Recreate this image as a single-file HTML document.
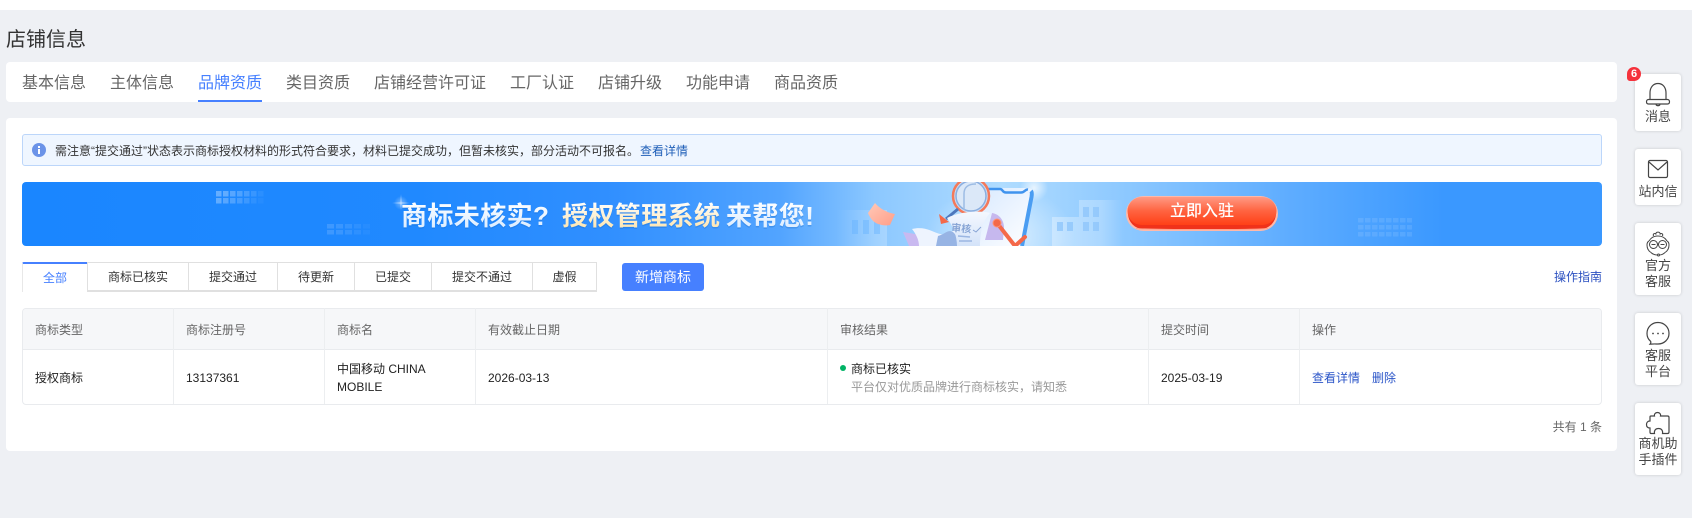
<!DOCTYPE html>
<html lang="zh-CN">
<head>
<meta charset="utf-8">
<title>店铺信息</title>
<style>
html,body{margin:0;padding:0;width:1692px;height:518px;overflow:hidden;background:#eef0f4;}
body{font-family:"Liberation Sans","Noto Sans CJK SC",sans-serif;color:#222;position:relative;font-size:12px;}
.a{position:absolute;white-space:nowrap;}
.t{position:absolute;white-space:nowrap;line-height:18px;height:18px;}
.tab{position:absolute;top:64px;height:40px;line-height:40px;font-size:16px;color:#666;white-space:nowrap;}
.st{position:absolute;top:262px;height:27px;line-height:29px;text-align:center;color:#333;background:#fff;border:1px solid #e0e0e0;border-left:0;border-bottom-width:2px;box-sizing:content-box;font-size:12px;}
.v{position:absolute;top:308px;width:1px;height:96px;background:#eceef0;}
.th{position:absolute;top:321px;line-height:18px;color:#666;white-space:nowrap;}
.td{position:absolute;line-height:18px;color:#222;white-space:nowrap;}
.side{position:absolute;left:1635px;width:46px;background:#fff;border-radius:3px;box-shadow:0 0 3px rgba(0,0,0,.16);text-align:center;font-size:13px;line-height:16px;color:#444;}
.side svg{position:absolute;left:0;top:0;}
.side div{position:absolute;left:0;right:0;}
</style>
</head>
<body>
<div class="a" style="left:0;top:0;width:1692px;height:10px;background:#fff"></div>
<div class="a" style="left:6px;top:26px;font-size:20px;line-height:28px;color:#333">店铺信息</div>

<div class="a" style="left:6px;top:62px;width:1611px;height:40px;background:#fff;border-radius:4px"></div>
<div class="tab" style="left:22px">基本信息</div>
<div class="tab" style="left:110px">主体信息</div>
<div class="tab" style="left:198px;color:#4680ff">品牌资质</div>
<div class="a" style="left:198px;top:100px;width:64px;height:2px;background:#4680ff"></div>
<div class="tab" style="left:286px">类目资质</div>
<div class="tab" style="left:374px">店铺经营许可证</div>
<div class="tab" style="left:510px">工厂认证</div>
<div class="tab" style="left:598px">店铺升级</div>
<div class="tab" style="left:686px">功能申请</div>
<div class="tab" style="left:774px">商品资质</div>

<div class="a" style="left:6px;top:118px;width:1611px;height:333px;background:#fff;border-radius:4px"></div>

<div class="a" style="left:22px;top:134px;width:1578px;height:30px;background:#eff6ff;border:1px solid #bcd6fa;border-radius:3px"></div>
<svg class="a" style="left:32px;top:143px" width="14" height="14" viewBox="0 0 14 14"><circle cx="7" cy="7" r="7" fill="#6b93e8"/><rect x="6" y="6" width="2" height="5" fill="#fff"/><rect x="6" y="3" width="2" height="2" fill="#fff"/></svg>
<div class="t" style="left:55px;top:142px;color:#333">需注意“提交通过”状态表示商标授权材料的形式符合要求，材料已提交成功，但暂未核实，部分活动不可报名。<span style="color:#1f5fb8;margin-left:1px">查看详情</span></div>

<!-- banner -->
<div class="a" style="left:22px;top:182px;width:1580px;height:64px;border-radius:4px;overflow:hidden;background:linear-gradient(90deg,#1a86ff 0%,#2089ff 25%,#308fff 37%,#52a4ff 48%,#8cc8ff 54%,#b0dcff 62%,#8cc8ff 70%,#5fadff 80%,#3a98ff 90%,#3a98ff 100%)">
<svg width="1580" height="64" viewBox="22 182 1580 64" style="position:absolute;left:0;top:0">
<defs>
<radialGradient id="g1"><stop offset="0" stop-color="#fff" stop-opacity=".75"/><stop offset="1" stop-color="#fff" stop-opacity="0"/></radialGradient>
<linearGradient id="bld" x1="0" y1="0" x2="1" y2="0"><stop offset="0" stop-color="#fff" stop-opacity=".32"/><stop offset=".7" stop-color="#fff" stop-opacity=".22"/><stop offset="1" stop-color="#fff" stop-opacity="0"/></linearGradient>
<linearGradient id="bld2" x1="0" y1="0" x2="1" y2="0"><stop offset="0" stop-color="#fff" stop-opacity="0"/><stop offset="1" stop-color="#fff" stop-opacity=".22"/></linearGradient>
<linearGradient id="gold" x1="0" y1="0" x2="0" y2="1"><stop offset="0" stop-color="#ffffff"/><stop offset="1" stop-color="#fde3a9"/></linearGradient>
<linearGradient id="white" x1="0" y1="0" x2="0" y2="1"><stop offset="0" stop-color="#ffffff"/><stop offset="1" stop-color="#d8ebff"/></linearGradient>
<linearGradient id="btn" x1="0" y1="0" x2="0" y2="1"><stop offset="0" stop-color="#ff9a84"/><stop offset=".5" stop-color="#ff6340"/><stop offset="1" stop-color="#ff4016"/></linearGradient>
<linearGradient id="paper" x1="0" y1="0" x2="0" y2="1"><stop offset="0" stop-color="#f4f8ff"/><stop offset="1" stop-color="#d4e3f9"/></linearGradient>
<linearGradient id="ph" x1="0" y1="0" x2="1" y2="1"><stop offset="0" stop-color="#d8e9ff"/><stop offset="1" stop-color="#ffffff"/></linearGradient>
<linearGradient id="flag" x1="0" y1="0" x2="1" y2="1"><stop offset="0" stop-color="#ffc9b8"/><stop offset="1" stop-color="#ff9e88"/></linearGradient>
<pattern id="dp" width="7" height="7" patternUnits="userSpaceOnUse"><rect width="5.5" height="5.5" rx=".6" fill="#fff"/></pattern>
</defs>
<!-- pixel dots -->
<g>
<rect x="216" y="191" width="5.500" height="5.500" fill="#fff" opacity=".32"/><rect x="223" y="191" width="5.500" height="5.500" fill="#fff" opacity=".3"/><rect x="230" y="191" width="5.500" height="5.500" fill="#fff" opacity=".26"/><rect x="237" y="191" width="5.500" height="5.500" fill="#fff" opacity=".22"/><rect x="244" y="191" width="5.500" height="5.500" fill="#fff" opacity=".18"/><rect x="251" y="191" width="5.500" height="5.500" fill="#fff" opacity=".12"/><rect x="258" y="191" width="5.500" height="5.500" fill="#fff" opacity=".06"/>
<rect x="216" y="198" width="5.500" height="5.500" fill="#fff" opacity=".3"/><rect x="223" y="198" width="5.500" height="5.500" fill="#fff" opacity=".26"/><rect x="230" y="198" width="5.500" height="5.500" fill="#fff" opacity=".22"/><rect x="237" y="198" width="5.500" height="5.500" fill="#fff" opacity=".18"/><rect x="244" y="198" width="5.500" height="5.500" fill="#fff" opacity=".14"/><rect x="251" y="198" width="5.500" height="5.500" fill="#fff" opacity=".08"/><rect x="258" y="198" width="5.500" height="5.500" fill="#fff" opacity=".04"/>
<rect x="327" y="224" width="7" height="4.500" fill="#fff" opacity=".14"/><rect x="336" y="224" width="7" height="4.500" fill="#fff" opacity=".12"/><rect x="345" y="224" width="7" height="4.500" fill="#fff" opacity=".1"/><rect x="354" y="224" width="7" height="4.500" fill="#fff" opacity=".07"/><rect x="363" y="224" width="7" height="4.500" fill="#fff" opacity=".04"/>
<rect x="327" y="230" width="7" height="4.500" fill="#fff" opacity=".14"/><rect x="336" y="230" width="7" height="4.500" fill="#fff" opacity=".12"/><rect x="345" y="230" width="7" height="4.500" fill="#fff" opacity=".1"/><rect x="354" y="230" width="7" height="4.500" fill="#fff" opacity=".07"/><rect x="363" y="230" width="7" height="4.500" fill="#fff" opacity=".04"/>
<rect x="1358" y="218" width="54" height="5" fill="url(#dp)" opacity=".1"/><rect x="1358" y="225" width="54" height="5" fill="url(#dp)" opacity=".1"/><rect x="1358" y="232" width="54" height="5" fill="url(#dp)" opacity=".1"/>
</g>
<!-- star at title start -->
<circle cx="401" cy="203" r="7" fill="url(#g1)" opacity=".5"/>
<path d="M401 194L401.600 202.400L410 203L401.600 203.600L401 210L400.400 203.600L392 203L400.400 202.400Z" fill="#fff" opacity=".55"/>
<!-- glow behind illustration -->
<ellipse cx="1000" cy="236" rx="75" ry="50" fill="url(#g1)" opacity=".8"/>
<circle cx="1034" cy="188" r="14" fill="url(#g1)"/>
<!-- left building -->
<path d="M836 210H887V246H836Z" fill="url(#bld2)"/>
<rect x="852" y="220" width="6" height="14" fill="#5faeff" opacity=".4"/><rect x="863" y="220" width="6" height="14" fill="#5faeff" opacity=".4"/><rect x="874" y="220" width="6" height="14" fill="#5faeff" opacity=".4"/>
<!-- flag -->
<path d="M868 213L875 203C880 209 888 213 895 214L890 225C884 226 882 225 878 224C873 222 870 218 868 213Z" fill="url(#flag)"/>
<!-- right building -->
<path d="M1052 246V217H1079V200H1123V246Z" fill="url(#bld)"/>
<rect x="1057" y="222" width="6" height="9" fill="#8fc6fb" opacity=".8"/><rect x="1067" y="222" width="6" height="9" fill="#8fc6fb" opacity=".8"/>
<rect x="1083" y="207" width="6" height="10" fill="#8fc6fb" opacity=".8"/><rect x="1093" y="207" width="6" height="10" fill="#8fc6fb" opacity=".8"/><rect x="1083" y="222" width="6" height="9" fill="#8fc6fb" opacity=".8"/><rect x="1093" y="222" width="6" height="9" fill="#8fc6fb" opacity=".8"/>
<!-- phone -->
<path d="M988 188H1028C1031 188 1033 190 1032.500 193L1023 246H975Z" fill="url(#ph)"/>
<path d="M988 189H1000C1003 189 1002 192.500 1006 192.500H1021C1025 192.500 1025 189 1028 189.500" fill="none" stroke="#3f93ee" stroke-width="2.500"/>
<path d="M1031 191C1032 192 1032 194 1031.500 197L1022 246" fill="none" stroke="#4a9df2" stroke-width="4"/>
<!-- magnifier -->
<circle cx="971" cy="196" r="18" fill="#c9dcf3" stroke="#f4795a" stroke-width="2.500"/>
<circle cx="971" cy="196" r="15" fill="#dbe8f8" stroke="#8aaee0" stroke-width="1.500"/>
<path d="M964 210V194C964 187 968 184 976 184" stroke="#9dbce4" stroke-width="1.500" fill="none"/>
<path d="M958 209L946 219" stroke="#4e78bd" stroke-width="3"/>
<path d="M939 214L949 222L941 224Z" fill="#f4694a"/>
<!-- papers -->
<path d="M903 232L940 238L950 246H909Z" fill="#c9b9f0"/>
<path d="M912 229C925 226 932 232 940 234C948 236 952 228 958 232L962 246H919C919 240 916 234 912 229Z" fill="#eef4fe"/>
<path d="M938 236C945 234 948 229 953 232C958 236 958 242 958 246H936Z" fill="#97b4e4"/>
<path d="M992 213C999 214 1004 220 1004 228L1003 240L985 240Z" fill="#c6b8ee"/>
<path d="M947 218C958 212 980 210 990 213C982 222 980 234 980 246H957C957 236 953 226 947 218Z" fill="url(#paper)"/>
<text x="951" y="231" font-family="Liberation Sans,Noto Sans CJK SC,sans-serif" font-size="10" font-weight="700" fill="#88a5d5" transform="rotate(5 951 231)">审核</text>
<path d="M973 230L976 232L981 227" stroke="#88a5d5" stroke-width="1" fill="none"/>
<path d="M958 236L970 237M959 241L972 241" stroke="#9bb6e2" stroke-width="1.500"/>
<!-- red arm -->
<path d="M997 223L1015 246L1025 237" stroke="#f4694a" stroke-width="4" fill="none" stroke-linecap="round"/>
<circle cx="997" cy="223" r="4" fill="#f4694a" stroke="#ff9274" stroke-width="1"/>
<!-- CTA button -->
<rect x="1126" y="196" width="152" height="35" rx="17.500" fill="#ffb9a9"/>
<rect x="1128" y="198" width="148" height="31" rx="15.500" fill="#f0321a"/>
<rect x="1127.500" y="197" width="149" height="28" rx="14" fill="url(#btn)"/>
<path d="M1136 228.500C1152 230 1252 230 1268 228.500" stroke="#ffa08c" stroke-width="1" fill="none"/>
<text x="1202" y="216" text-anchor="middle" font-family="Liberation Sans,Noto Sans CJK SC,sans-serif" font-size="16" font-weight="500" fill="#fff">立即入驻</text>
<!-- title -->
<g font-family="Liberation Sans,Noto Sans CJK SC,sans-serif" font-size="26" font-weight="700" style="letter-spacing:.4px">
<text x="401" y="225" fill="#1668c8" opacity=".3" transform="translate(0 1.500)">商标未核实?</text>
<text x="562" y="225" fill="#1668c8" opacity=".3" transform="translate(0 1.500)">授权管理系统</text>
<text x="726" y="225" fill="#1668c8" opacity=".3" transform="translate(0 1.500)">来帮您!</text>
<text x="401" y="225" fill="url(#white)">商标未核实?</text>
<text x="562" y="225" fill="url(#gold)">授权管理系统</text>
<text x="726" y="225" fill="url(#white)">来帮您!</text>
</g>
</svg>
</div>

<!-- subtabs -->
<div class="a" style="left:22px;top:262px;width:65px;height:30px;background:#fff;border-left:1px solid #e8e8e8;border-top:2px solid #4680ff;box-sizing:border-box;border-radius:2px 0 0 0;text-align:center;line-height:28px;color:#4680ff">全部</div>
<div class="st" style="left:87px;width:100px;border-left:1px solid #e0e0e0">商标已核实</div>
<div class="st" style="left:189px;width:88px">提交通过</div>
<div class="st" style="left:278px;width:76px">待更新</div>
<div class="st" style="left:355px;width:76px">已提交</div>
<div class="st" style="left:432px;width:100px">提交不通过</div>
<div class="st" style="left:533px;width:63px">虚假</div>
<div class="a" style="left:622px;top:263px;width:82px;height:28px;line-height:28px;background:#4680ff;border-radius:3px;color:#fff;text-align:center;font-size:14px">新增商标</div>
<div class="t" style="right:90px;top:268px;color:#2b50c0">操作指南</div>

<!-- table -->
<div class="a" style="left:22px;top:308px;width:1580px;height:97px;box-sizing:border-box;border:1px solid #e9ebee;border-radius:4px;overflow:hidden;background:#fff">
  <div style="height:40px;background:#f6f7f9;border-bottom:1px solid #e9ebee"></div>
</div>
<div class="v" style="left:173px"></div>
<div class="v" style="left:324px"></div>
<div class="v" style="left:475px"></div>
<div class="v" style="left:827px"></div>
<div class="v" style="left:1148px"></div>
<div class="v" style="left:1299px"></div>
<div class="th" style="left:35px">商标类型</div>
<div class="th" style="left:186px">商标注册号</div>
<div class="th" style="left:337px">商标名</div>
<div class="th" style="left:488px">有效截止日期</div>
<div class="th" style="left:840px">审核结果</div>
<div class="th" style="left:1161px">提交时间</div>
<div class="th" style="left:1312px">操作</div>

<div class="td" style="left:35px;top:369px">授权商标</div>
<div class="td" style="left:186px;top:369px">13137361</div>
<div class="td" style="left:337px;top:360px">中国移动 CHINA<br>MOBILE</div>
<div class="td" style="left:488px;top:369px">2026-03-13</div>
<div class="a" style="left:840px;top:365px;width:6px;height:6px;border-radius:50%;background:#00b365"></div>
<div class="td" style="left:851px;top:360px">商标已核实</div>
<div class="td" style="left:851px;top:378px;color:#999">平台仅对优质品牌进行商标核实，请知悉</div>
<div class="td" style="left:1161px;top:369px">2025-03-19</div>
<div class="td" style="left:1312px;top:369px;color:#2b55c8">查看详情</div>
<div class="td" style="left:1372px;top:369px;color:#2b55c8">删除</div>
<div class="t" style="right:90px;top:418px;color:#666">共有 1 条</div>

<!-- sidebar -->
<div class="side" style="top:74px;height:57px">
<svg width="46" height="57" viewBox="0 0 46 57" fill="none" stroke="#444" stroke-width="1.200"><path d="M15 25.500V19C15 13 18.500 9.500 23 9.500C27.500 9.500 31 13 31 19V25.500"/><path d="M13.500 25.500H32.500C33.700 25.500 34.500 26.500 34.500 27.800C34.500 29.200 33.700 30 32.500 30H13.500C12.300 30 11.500 29.200 11.500 27.800C11.500 26.500 12.300 25.500 13.500 25.500Z"/><path d="M21 30.500C21.500 32 24.500 32 25 30.500"/></svg>
<div style="top:35px">消息</div>
</div>
<div class="a" style="left:1627px;top:67px;width:14px;height:14px;border-radius:7px 7px 7px 3px;background:#f5323c;color:#fff;font-size:11px;font-weight:700;line-height:14px;text-align:center">6</div>

<div class="side" style="top:149px;height:56px">
<svg width="46" height="56" viewBox="0 0 46 56" fill="none" stroke="#444" stroke-width="1.200"><rect x="13.500" y="11.500" width="19" height="17" rx="1.500"/><path d="M14 13L23 21L32 13"/></svg>
<div style="top:35px">站内信</div>
</div>

<div class="side" style="top:223px;height:72px">
<svg width="46" height="72" viewBox="0 0 46 72" fill="none" stroke="#444" stroke-width="1"><path d="M14 18C16 14.500 19 13 23 13C27 13 30 14.500 32 18"/><path d="M18.500 13C17.500 10.500 20 10 20.800 11C21 8.500 25 8.500 25.200 11C26 10 28.500 10.500 27.500 13"/><path d="M12 22C12 19.500 13 18.500 14 18M34 22C34 19.500 33 18.500 32 18"/><path d="M12 22C12 26 13.500 28 16 29.500M34 22C34 26 32.500 28 30 29.500"/><circle cx="18.500" cy="21.500" r="4"/><circle cx="27.500" cy="21.500" r="4"/><path d="M16.500 21.500H20.500M25.500 21.500H29.500"/><path d="M16 29.500C18 31.500 20.500 32 22.500 32M30 29.500C28.500 31 26.500 32 24.500 32"/><circle cx="23.500" cy="32" r="1"/></svg>
<div style="top:35px">官方<br>客服</div>
</div>

<div class="side" style="top:313px;height:72px">
<svg width="46" height="72" viewBox="0 0 46 72" fill="none" stroke="#444" stroke-width="1.200"><path d="M23 9.500C29 9.500 34 14 34 20.500C34 26.500 29 31 23 31C20.500 31 18 30.800 15 31.200C16.200 29.600 16 28.500 15.300 28C13 26 12 23.500 12 20.500C12 14 17 9.500 23 9.500Z"/><circle cx="18" cy="20.500" r=".9" fill="#444" stroke="none"/><circle cx="23" cy="20.500" r=".9" fill="#444" stroke="none"/><circle cx="28" cy="20.500" r=".9" fill="#444" stroke="none"/></svg>
<div style="top:35px">客服<br>平台</div>
</div>

<div class="side" style="top:403px;height:72px">
<svg width="46" height="72" viewBox="0 0 46 72" fill="none" stroke="#444" stroke-width="1.200"><path d="M16 13H19.500C19 11 20.500 9.500 22.500 9.500C24.500 9.500 26 11 25.500 13H32.500C33.500 13 34 13.500 34 14.500V29C34 30 33.500 30.500 32.500 30.500H27.500C28 27.500 26.500 25.500 23.500 25.500C20.500 25.500 19 27.500 19.500 30.500H16C15.200 30.500 15 30 15 29V25C12.500 25 11.500 23.500 11.500 21.500C11.500 19.500 12.800 18 15 18V14C15 13.500 15.400 13 16 13Z"/></svg>
<div style="top:33px">商机助<br>手插件</div>
</div>
</body>
</html>
